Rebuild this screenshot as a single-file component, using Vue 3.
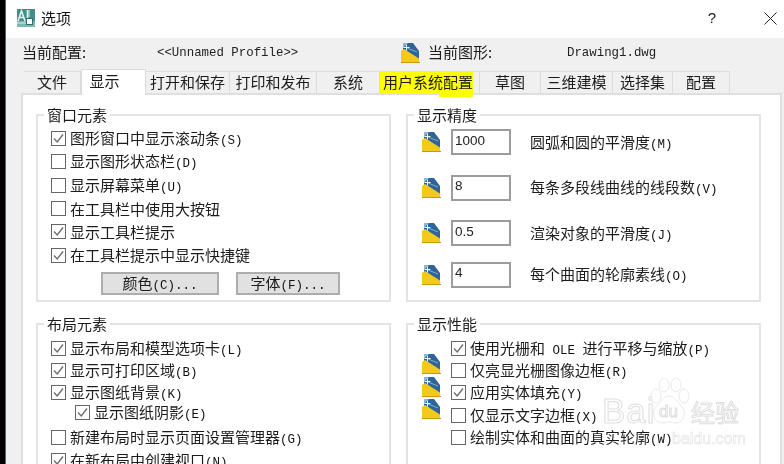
<script setup>
const tabs = [
  { t: '文件', w: 57 }, { t: '显示', w: 65, active: true }, { t: '打开和保存', w: 84 }, { t: '打印和发布', w: 87 },
  { t: '系统', w: 63 }, { t: '用户系统配置', w: 100, mark: true }, { t: '草图', w: 61 }, { t: '三维建模', w: 72 },
  { t: '选择集', w: 60 }, { t: '配置', w: 57 }
]
const win = [
  { l: '图形窗口中显示滚动条(S)', on: true }, { l: '显示图形状态栏(D)' }, { l: '显示屏幕菜单(U)' },
  { l: '在工具栏中使用大按钮' }, { l: '显示工具栏提示', on: true }, { l: '在工具栏提示中显示快捷键', on: true }
]
const layout = [
  { l: '显示布局和模型选项卡(L)', on: true }, { l: '显示可打印区域(B)', on: true }, { l: '显示图纸背景(K)', on: true },
  { l: '显示图纸阴影(E)', on: true, sub: true }, { l: '新建布局时显示页面设置管理器(G)', after: true }, { l: '在新布局中创建视口(N)', on: true }
]
const perf = [
  { l: '使用光栅和 OLE 进行平移与缩放(P)', on: true }, { l: '仅亮显光栅图像边框(R)' }, { l: '应用实体填充(Y)', on: true },
  { l: '仅显示文字边框(X)' }, { l: '绘制实体和曲面的真实轮廓(W)' }
]
const prec = [
  { v: '1000', l: '圆弧和圆的平滑度(M)' }, { v: '8', l: '每条多段线曲线的线段数(V)' },
  { v: '0.5', l: '渲染对象的平滑度(J)' }, { v: '4', l: '每个曲面的轮廓素线(O)' }
]
const segs = (s) => s.split(/([\x00-\x7f]+)/).filter(Boolean).map((x) => ({ x, lat: /^[\x00-\x7f]/.test(x) }))
</script>

<template>
  <div class="screen">
    <div class="edge"></div>
    <div class="win">
      <header class="title">
        <svg class="logo" viewBox="0 0 18 18">
          <rect width="18" height="18" fill="#3f8f8c" />
          <rect x="0" y="12" width="18" height="6" fill="#7fb6b0" />
          <path d="M1 12 4.5 2 8 12M2.5 8.5h4M10.5 1v11" fill="none" stroke="#e6f2f0" stroke-width="1.6" />
          <path d="M0 14h9M12 1v7" stroke="#dcebe8" stroke-width="1" />
          <rect x="9.5" y="9.5" width="6" height="6" fill="#fff" stroke="#2d6f6d" />
        </svg>
        <span class="title-text">选项</span>
        <span class="help">?</span>
        <svg class="close" viewBox="0 0 13 13"><path d="M.5.5l12 12M12.5.5l-12 12" stroke="#222" stroke-width="1" /></svg>
      </header>

      <div class="body">
        <div class="profile">
          <span class="p-label">当前配置:</span>
          <span class="mono p-name">&lt;&lt;Unnamed Profile&gt;&gt;</span>
          <svg class="dwg top-icon" viewBox="0 0 19 20"><use href="#dwg-icon" /></svg>
          <span class="p-label p-label2">当前图形:</span>
          <span class="mono">Drawing1.dwg</span>
        </div>

        <svg width="0" height="0" class="defs">
          <symbol id="dwg-icon" viewBox="0 0 19 20">
            <path d="M2 0H12L18 8V17H2Z" fill="#2f6496" />
            <path d="M2 0H7L2 5Z" fill="#8fb4d4" />
            <path d="M0 8 3 6 18 15.5V20H0Z" fill="#f3c91b" />
            <path d="M0 19H19V20H0Z" fill="#c99a10" />
            <path d="M5.5 1.5v6M2.5 4.5h6" stroke="#fff" stroke-width="1" />
            <path d="M6 5l10 4" stroke="#9dbfdc" stroke-width=".8" />
          </symbol>
        </svg>

        <nav class="tabs">
          <div
            v-for="tab in tabs"
            :key="tab.t"
            class="tab"
            :class="{ active: tab.active, mark: tab.mark }"
            :style="{ width: tab.w + 'px' }"
          >
            <span>{{ tab.t }}</span>
          </div>
        </nav>

        <main class="panel">
          <section class="group g1">
            <div class="legend">窗口元素</div>
            <div class="rows">
              <div v-for="r in win" :key="r.l" class="check">
                <span class="box"><svg v-if="r.on" viewBox="0 0 13 13"><path d="M2 6.5 5.2 10 11 2.5" fill="none" stroke="#6e6e6e" stroke-width="1.4" /></svg></span>
                <span><span v-for="(s, i) in segs(r.l)" :key="i" :class="{ lat: s.lat }">{{ s.x }}</span></span>
              </div>
            </div>
            <div class="buttons">
              <button class="btn b1">颜色<span class="lat">(C)...</span></button>
              <button class="btn b2">字体<span class="lat">(F)...</span></button>
            </div>
          </section>

          <section class="group g1">
            <div class="legend">显示精度</div>
            <div class="fields">
              <div v-for="f in prec" :key="f.l" class="field">
                <svg class="dwg" viewBox="0 0 19 20"><use href="#dwg-icon" /></svg>
                <input class="input" :value="f.v" readonly />
                <span><span v-for="(s, i) in segs(f.l)" :key="i" :class="{ lat: s.lat }">{{ s.x }}</span></span>
              </div>
            </div>
          </section>

          <section class="group g2">
            <div class="legend">布局元素</div>
            <div class="rows tight">
              <div v-for="r in layout" :key="r.l" class="check" :class="{ sub: r.sub, after: r.after }">
                <span class="box"><svg v-if="r.on" viewBox="0 0 13 13"><path d="M2 6.5 5.2 10 11 2.5" fill="none" stroke="#6e6e6e" stroke-width="1.4" /></svg></span>
                <span><span v-for="(s, i) in segs(r.l)" :key="i" :class="{ lat: s.lat }">{{ s.x }}</span></span>
              </div>
            </div>
          </section>

          <section class="group g2">
            <div class="legend">显示性能</div>
            <div class="perf">
              <div class="perf-icons">
                <svg v-for="n in 3" :key="n" class="dwg" viewBox="0 0 19 20"><use href="#dwg-icon" /></svg>
              </div>
              <div class="rows tight">
                <div v-for="r in perf" :key="r.l" class="check">
                  <span class="box"><svg v-if="r.on" viewBox="0 0 13 13"><path d="M2 6.5 5.2 10 11 2.5" fill="none" stroke="#6e6e6e" stroke-width="1.4" /></svg></span>
                  <span><span v-for="(s, i) in segs(r.l)" :key="i" :class="{ lat: s.lat }">{{ s.x }}</span></span>
                </div>
              </div>
            </div>
          </section>
        </main>
      </div>
    </div>

    <div class="watermark">
      <span class="wm-bai">Bai</span>
      <svg class="wm-paw" viewBox="0 0 44 48">
        <g fill="#fff" stroke="#dedede" stroke-width="1">
          <ellipse cx="9" cy="18" rx="5" ry="7" />
          <ellipse cx="17" cy="7" rx="5" ry="7" />
          <ellipse cx="29" cy="7" rx="5" ry="7" />
          <ellipse cx="37" cy="18" rx="5" ry="7" />
          <path d="M22 18c6 0 8 6 13 11 5 6 2 16-6 16-3 0-5-1-7-1s-4 1-7 1c-8 0-11-10-6-16 5-5 7-11 13-11Z" />
        </g>
      </svg>
      <span class="wm-du">du</span>
      <span class="wm-cn">经验</span>
      <span class="wm-url">baidu.com</span>
    </div>
  </div>
</template>

<style scoped>
.screen {
  position: relative;
  display: flex;
  width: 784px;
  height: 464px;
  overflow: hidden;
  background: #fff;
  color: #1c1c1c;
  font: 15px/1.2 "Noto Sans CJK SC", "Liberation Sans", sans-serif;
  filter: blur(0.35px);
}
.edge {
  flex: none;
  width: 5px;
  background: #000;
  border-right: 1px solid #1f6fb8;
}
.win {
  flex: 1;
  min-width: 0;
  display: flex;
  flex-direction: column;
}
.title {
  flex: none;
  height: 38px;
  display: flex;
  align-items: center;
  padding: 0 7px 2px 11px;
  box-sizing: border-box;
}
.logo { width: 18px; height: 18px; }
.title-text { margin: 0 0 1px 6px; color: #111; }
.help { margin-left: auto; font-family: "Liberation Sans", sans-serif; font-size: 15px; }
.close { width: 13px; height: 13px; margin-left: 48px; }
.body { flex: 1; background: #f0f0f0; padding: 0 2px 0 0; min-height: 0; }
.profile {
  height: 33px;
  display: flex;
  align-items: center;
  padding-left: 16px;
  box-sizing: border-box;
}
.p-label { width: 135px; flex: none; padding-bottom: 6px; box-sizing: border-box; }
.p-label.p-label2 { width: 139px; margin-left: 8px; }
.p-name { width: 244px; flex: none; }
.mono { font: 12.4px "Liberation Mono", monospace; color: #222; padding-bottom: 3px; }
.dwg { width: 19px; height: 20px; flex: none; display: block; }
.top-icon { margin-bottom: 3px; }
.defs { position: absolute; }
.tabs {
  display: flex;
  align-items: flex-end;
  height: 22px;
  padding-left: 18px;
  position: relative;
  z-index: 1;
}
.tab {
  height: 22px;
  box-sizing: border-box;
  display: flex;
  align-items: center;
  justify-content: center;
  border: 1px solid #dcdcdc;
  border-bottom: none;
  border-left: none;
  background: #f0f0f0;
  padding-bottom: 1px;
}
.tab.active {
  height: 26px;
  margin-bottom: -2px;
  background: #fff;
  border-left: 1px solid #dcdcdc;
  padding: 0 18px 3px 0;
}
.tab.mark {
  position: relative;
  justify-content: flex-start;
  padding-bottom: 0;
}
.tab.mark span {
  position: relative;
  display: flex;
  align-items: center;
  height: 22px;
  width: 93px;
  padding: 0 0 1px 3px;
  box-sizing: border-box;
  background: #ffff00;
}
.tab.mark span::after {
  content: "";
  position: absolute;
  left: 59px;
  right: 0;
  top: 100%;
  height: 3px;
  background: #ffff00;
}
.panel {
  margin-left: 15px;
  background: #fff;
  border: 2px solid #dfdfdf;
  border-bottom: none;
  height: 371px;
  box-sizing: border-box;
  padding: 19px 0 0 13px;
  display: grid;
  grid-template-columns: 355px 355px;
  grid-template-rows: 188px 1fr;
  column-gap: 15px;
  row-gap: 21px;
  overflow: hidden;
}
.group {
  border: 2px solid #e4e4e4;
  padding: 0 0 0 13px;
  min-width: 0;
}
.g2 { border-bottom: none; height: 200px; }
.legend {
  width: max-content;
  height: 20px;
  line-height: 20px;
  margin: -11px 0 0 -7px;
  padding: 0 3px;
  background: #fff;
}
.rows { padding-top: 2px; }
.rows.tight { padding-top: 3px; }
.check {
  display: flex;
  align-items: center;
  height: 23.3px;
  white-space: nowrap;
}
.tight .check { height: 22.4px; }
.check.sub { margin-left: 24px; height: 17.6px; }
.check.after { margin-top: 5px; }
.box {
  flex: none;
  width: 15px;
  height: 15px;
  box-sizing: border-box;
  border: 1.5px solid #666;
  background: #fff;
  margin-right: 4px;
  display: flex;
}
.box svg { width: 100%; height: 100%; display: block; }
.lat { font: 12.5px "Liberation Mono", monospace; color: #111; }
.buttons { display: flex; margin: 5px 0 0 50px; }
.btn {
  height: 23px;
  box-sizing: border-box;
  border: 2px solid #adadad;
  background: #e1e1e1;
  color: #1c1c1c;
  font: inherit;
  padding: 0;
}
.b1 { width: 118px; margin-right: 17px; }
.b2 { width: 104px; }
.fields { padding-top: 4px; display: flex; flex-direction: column; gap: 19.5px; }
.field {
  display: flex;
  align-items: center;
  height: 26px;
  padding-left: 1px;
}
.field:last-child { margin-top: -4px; }
.input {
  width: 60px;
  height: 26px;
  box-sizing: border-box;
  border: 2px solid #9c9c9c;
  background: #fff;
  margin: 0 19px 0 10px;
  padding: 0 0 4px 2px;
  color: #222;
  font: 13.5px "Liberation Sans", sans-serif;
  outline: none;
}
.perf { display: flex; padding-left: 1px; }
.perf-icons {
  display: flex;
  flex-direction: column;
  gap: 2.5px;
  padding-top: 20px;
  margin-right: 10px;
}
.watermark {
  position: absolute;
  left: 0;
  top: 0;
  width: 784px;
  height: 464px;
  pointer-events: none;
  opacity: 0.85;
}
.watermark span { position: absolute; color: #fff; -webkit-text-stroke: 1px #d8d8d8; white-space: nowrap; font-family: "Liberation Sans", sans-serif; }
.wm-bai { left: 602px; top: 391px; font-size: 35px; line-height: 40px; letter-spacing: 1px; }
.wm-paw { position: absolute; left: 647px; top: 378px; width: 44px; height: 48px; opacity: .8; }
.watermark .wm-du { left: 659px; top: 402px; font-size: 17px; line-height: 20px; }
.watermark .wm-cn { left: 691px; top: 397px; font-size: 24px; line-height: 30px; font-family: "Noto Sans CJK SC", sans-serif; }
.watermark .wm-url { left: 672px; top: 429px; font-size: 16px; line-height: 20px; -webkit-text-stroke: .6px #dcdcdc; }
</style>

<style>
html, body { margin: 0; overflow: hidden; }
</style>
